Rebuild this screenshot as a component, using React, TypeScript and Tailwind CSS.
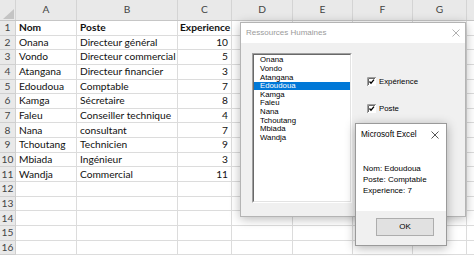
import React from "react";

const cols = [16, 61, 101, 54, 61, 60, 60, 54];
const letters = ["A", "B", "C", "D", "E", "F", "G"];
const data: string[][] = [
  ["Nom", "Poste", "Experience"],
  ["Onana", "Directeur général", "10"],
  ["Vondo", "Directeur commercial", "5"],
  ["Atangana", "Directeur financier", "3"],
  ["Edoudoua", "Comptable", "7"],
  ["Kamga", "Sécretaire", "8"],
  ["Faleu", "Conseiller technique", "4"],
  ["Nana", "consultant", "7"],
  ["Tchoutang", "Technicien", "9"],
  ["Mbiada", "Ingénieur", "3"],
  ["Wandja", "Commercial", "11"],
];
const names = ["Onana", "Vondo", "Atangana", "Edoudoua", "Kamga", "Faleu", "Nana", "Tchoutang", "Mbiada", "Wandja"];

function CloseX({ color }: { color: string }) {
  return (
    <svg width="8" height="8" viewBox="0 0 8 8">
      <path d="M0.5 0.5 L7.5 7.5 M7.5 0.5 L0.5 7.5" stroke={color} strokeWidth="0.9" />
    </svg>
  );
}

function CheckBox({ label, top }: { label: string; top: number }) {
  return (
    <div className="absolute left-[126px] flex items-center gap-[3px]" style={{ top }}>
      <svg width="9" height="9" viewBox="0 0 9 9">
        <rect x="0" y="0" width="9" height="9" fill="#ffffff" />
        <path d="M0.5 9 V0.5 H9" stroke="#a0a0a0" strokeWidth="1" fill="none" />
        <path d="M1.5 8 V1.5 H8" stroke="#696969" strokeWidth="1" fill="none" />
        <path d="M2.5 4.5 L4 6.2 L7 2.6" stroke="#000" strokeWidth="1.3" fill="none" />
      </svg>
      <span className="text-[7.8px] leading-none text-black">{label}</span>
    </div>
  );
}

export default function App() {
  const rows = Array.from({ length: 16 }, (_, i) => i);
  return (
    <div
      className="relative w-[474px] h-[256px] overflow-hidden bg-white"
      style={{ fontFamily: "Lato, 'Liberation Sans', sans-serif" }}
    >
      {/* Column header */}
      <div className="flex h-[21px] bg-[#e9e9e9] border-b border-[#c6c6c6]">
        <div className="relative w-[16px] shrink-0 border-r border-[#d4d4d4]">
          <svg className="absolute right-[1px] bottom-[1px]" width="11" height="10" viewBox="0 0 11 10">
            <polygon points="11,0 11,10 0,10" fill="#c4c4c4" />
          </svg>
        </div>
        {letters.map((l, i) => (
          <div
            key={l}
            className="shrink-0 flex items-center justify-center border-r border-[#d4d4d4] text-[10.2px] text-[#444]"
            style={{ width: cols[i + 1] }}
          >
            {l}
          </div>
        ))}
        <div className="flex-1" />
      </div>

      {/* Rows */}
      {rows.map((r) => {
        const d = data[r];
        const bold = r === 0;
        return (
          <div key={r} className="flex h-[14.65px]">
            <div className="w-[16px] shrink-0 flex items-center justify-center bg-[#e9e9e9] border-r border-b border-[#d0d0d0] text-[10.2px] text-[#444]">
              {r + 1}
            </div>
            {Array.from({ length: 7 }, (_, c) => {
              const txt = d && c < 3 ? d[c] : "";
              const right = c === 2 && r > 0;
              return (
                <div
                  key={c}
                  className={`shrink-0 flex items-center border-r border-b border-[#dcdcdc] text-[10.2px] text-[#111] whitespace-nowrap overflow-visible ${
                    right ? "justify-end pr-[3px]" : c === 2 ? "pl-[2px]" : "pl-[3px]"
                  } ${bold ? "font-bold" : ""}`}
                  style={{ width: cols[c + 1] }}
                >
                  {txt}
                </div>
              );
            })}
            <div className="flex-1 border-b border-[#dcdcdc]" />
          </div>
        );
      })}

      {/* UserForm: Ressources Humaines */}
      <div
        className="absolute left-[240px] top-[22px] w-[226px] h-[195px] bg-[#f0f0f0] border border-[#b4b4b4] shadow-[0_2px_10px_rgba(0,0,0,0.28)]"
        style={{ fontFamily: "'Liberation Sans', Arial, sans-serif" }}
      >
        <div className="h-[20px] bg-white flex items-center justify-between pl-[5px] pr-[5px]">
          <span className="text-[8px] text-[#9a9a9a]">Ressources Humaines</span>
          <CloseX color="#a8a8a8" />
        </div>
        {/* ListBox */}
        <div className="absolute left-[11px] top-[30px] w-[100px] h-[150px] bg-white border-t border-l border-[#a0a0a0] border-r border-b border-r-white border-b-white">
          <div className="w-full h-full border-t border-l border-[#696969] border-r border-b border-r-[#e3e3e3] border-b-[#e3e3e3] pt-[1px]">
            {names.map((n) => {
              const sel = n === "Edoudoua";
              return (
                <div
                  key={n}
                  className={`h-[8.6px] flex items-center pl-[6px] text-[7.8px] leading-none ${
                    sel ? "bg-[#0078d7] text-white" : "text-black"
                  }`}
                >
                  {n}
                </div>
              );
            })}
          </div>
        </div>
        <CheckBox label="Expérience" top={54} />
        <CheckBox label="Poste" top={81} />
      </div>

      {/* MsgBox: Microsoft Excel */}
      <div
        className="absolute left-[355px] top-[123px] w-[92px] h-[123px] bg-white border border-[#9a9a9a] shadow-[0_2px_10px_rgba(0,0,0,0.3)] flex flex-col"
        style={{ fontFamily: "'Liberation Sans', Arial, sans-serif" }}
      >
        <div className="h-[22px] flex items-center justify-between pl-[5px] pr-[7px]">
          <span className="text-[8.2px] text-black">Microsoft Excel</span>
          <CloseX color="#444" />
        </div>
        <div className="flex-1 pl-[7px] pt-[17px] text-[8px] leading-[11px] text-black">
          <div>Nom: Edoudoua</div>
          <div>Poste: Comptable</div>
          <div>Experience: 7</div>
        </div>
        <div className="h-[34px] bg-[#f0f0f0] flex items-start pt-[7px] pl-[20px]">
          <div className="w-[58px] h-[18px] bg-[#e1e1e1] border border-[#adadad] flex items-center justify-center text-[8px] text-black">
            OK
          </div>
        </div>
      </div>
    </div>
  );
}
